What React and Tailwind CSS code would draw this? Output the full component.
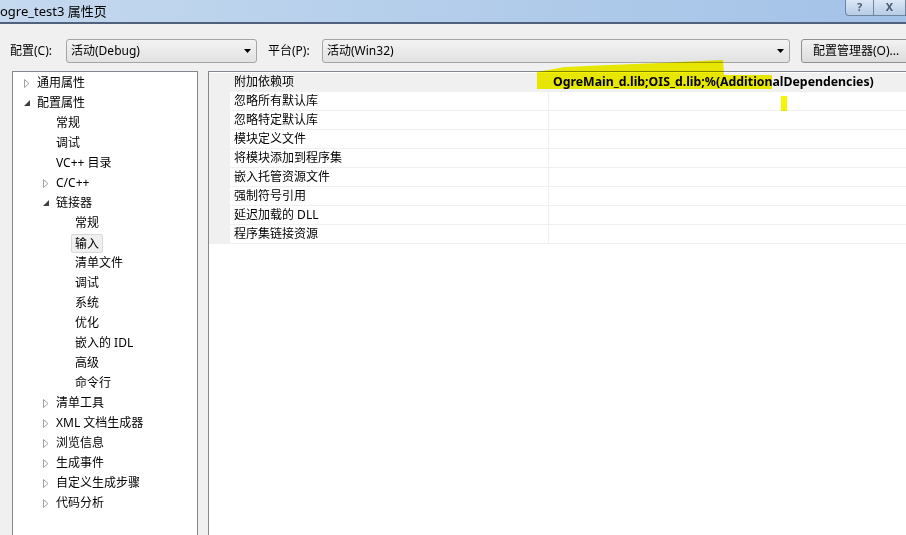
import React from "react";

const font = { fontFamily: '"Noto Sans", "Noto Sans CJK SC", sans-serif' };

const tree = [
  { label: "通用属性", level: 0, arrow: "closed" },
  { label: "配置属性", level: 0, arrow: "open" },
  { label: "常规", level: 1 },
  { label: "调试", level: 1 },
  { label: "VC++ 目录", level: 1 },
  { label: "C/C++", level: 1, arrow: "closed" },
  { label: "链接器", level: 1, arrow: "open" },
  { label: "常规", level: 2 },
  { label: "输入", level: 2, selected: true },
  { label: "清单文件", level: 2 },
  { label: "调试", level: 2 },
  { label: "系统", level: 2 },
  { label: "优化", level: 2 },
  { label: "嵌入的 IDL", level: 2 },
  { label: "高级", level: 2 },
  { label: "命令行", level: 2 },
  { label: "清单工具", level: 1, arrow: "closed" },
  { label: "XML 文档生成器", level: 1, arrow: "closed" },
  { label: "浏览信息", level: 1, arrow: "closed" },
  { label: "生成事件", level: 1, arrow: "closed" },
  { label: "自定义生成步骤", level: 1, arrow: "closed" },
  { label: "代码分析", level: 1, arrow: "closed" },
];

const props = [
  { name: "附加依赖项", value: "OgreMain_d.lib;OIS_d.lib;%(AdditionalDependencies)" },
  { name: "忽略所有默认库" },
  { name: "忽略特定默认库" },
  { name: "模块定义文件" },
  { name: "将模块添加到程序集" },
  { name: "嵌入托管资源文件" },
  { name: "强制符号引用" },
  { name: "延迟加载的 DLL" },
  { name: "程序集链接资源" },
];

const Arrow = ({ type }) =>
  type === "open" ? (
    <svg width="6" height="6" viewBox="0 0 6 6">
      <path d="M6 0 L6 6 L0 6 Z" fill="#404040" />
    </svg>
  ) : (
    <svg width="6" height="9" viewBox="0 0 6 9">
      <path d="M0.5 0.5 L5 4.5 L0.5 8.5 Z" fill="none" stroke="#a0a0a0" strokeWidth="1" />
    </svg>
  );

const Combo = ({ text, width }) => (
  <div
    className={`h-[24px] ${width} shrink-0 flex items-center justify-between pl-[4px] pr-[5px] rounded-[3px] border border-[#a5a5a5] bg-gradient-to-b from-[#f3f3f3] to-[#e2e2e2]`}
  >
    <span className="text-[12px] text-black">{text}</span>
    <svg width="7" height="4" viewBox="0 0 7 4">
      <path d="M0 0 L7 0 L3.5 4 Z" fill="#000" />
    </svg>
  </div>
);

export default function App() {
  return (
    <div className="relative w-[906px] h-[535px] overflow-hidden bg-[#f0f0f0]" style={font}>
      {/* title bar */}
      <div className="h-[22px] flex items-start justify-between bg-gradient-to-r from-[#c5d9ef] via-[#b3cdea] to-[#a3c2e8]">
        <span className="text-[13px] leading-[22px] text-black">ogre_test3 属性页</span>
        <div className="flex h-[16px]">
          <div className="w-[29px] h-[16px] flex items-center justify-center border border-t-0 border-[#6f84a3] rounded-bl-[4px] bg-gradient-to-b from-[#dbe7f5] to-[#b7cce6] text-[11px] font-bold text-[#4a5a70]">
            ?
          </div>
          <div className="w-[32px] h-[16px] flex items-center justify-center border border-t-0 border-l-0 border-[#6f84a3] bg-gradient-to-b from-[#dbe7f5] to-[#b7cce6] text-[11px] font-bold text-[#4a5a70]">
            X
          </div>
        </div>
      </div>
      <div className="h-[2px] bg-[#4f617c]" />

      {/* toolbar */}
      <div className="flex items-center h-[24px] mt-[15px] pl-[10px]">
        <span className="shrink-0 text-[12px] text-black w-[56px]">配置(C):</span>
        <Combo text="活动(Debug)" width="w-[191px]" />
        <span className="shrink-0 text-[12px] text-black ml-[11px] w-[54px]">平台(P):</span>
        <Combo text="活动(Win32)" width="w-[468px]" />
        <div className="ml-[11px] h-[24px] w-[110px] shrink-0 flex items-center pl-[11px] rounded-[3px] border border-[#8e8f8f] bg-gradient-to-b from-[#f2f2f2] to-[#dcdcdc] text-[12px] text-black whitespace-nowrap">
          配置管理器(O)...
        </div>
      </div>

      {/* panels */}
      <div className="flex mt-[8px] pl-[12px] h-[470px]">
        <div className="w-[186px] shrink-0 border border-[#828790] bg-white pt-[1px]">
          {tree.map((t, i) => (
            <div
              key={i}
              className="h-[20px] flex items-center text-[12px] text-black"
              style={{ paddingLeft: 11 + t.level * 19 }}
            >
              <span className="w-[13px] flex items-center">{t.arrow && <Arrow type={t.arrow} />}</span>
              {t.selected ? (
                <span className="-ml-[4px] px-[3px] h-[19px] leading-[18px] border border-[#d9d9d9] bg-[#f0f0f0] rounded-[2px]">
                  {t.label}
                </span>
              ) : (
                <span>{t.label}</span>
              )}
            </div>
          ))}
        </div>

        <div className="ml-[10px] w-[720px] shrink-0 border border-[#828790] bg-white pt-[1px]">
          {props.map((p, i) => (
            <div key={i} className={`h-[19px] flex ${i === 0 ? "bg-[#f0f0f0]" : ""}`}>
              <div className="w-[21px] shrink-0 bg-[#f0f0f0]" />
              <div className="w-[318px] shrink-0 flex items-center pl-[4px] text-[12px] text-black border-b border-[#f0f0f0]">
                {p.name}
              </div>
              <div className="flex-1 flex items-center pl-[4px] pt-[1px] border-l border-b border-[#f0f0f0] text-[12.3px] font-bold text-black whitespace-nowrap">
                {p.value}
              </div>
            </div>
          ))}
        </div>
      </div>

      {/* marker highlight over the screenshot */}
      <svg className="absolute left-0 top-0 pointer-events-none" width="906" height="535" style={{ mixBlendMode: "multiply" }}>
        <path
          d="M537 72 L548 70 L565 67 L610 65 L660 63 L700 61 L723 60 L724 75 L772 75 L772 89 L537 89 Z"
          fill="#f5f500"
        />
        <rect x="781" y="96" width="6" height="15" fill="#f5f500" />
      </svg>
    </div>
  );
}
